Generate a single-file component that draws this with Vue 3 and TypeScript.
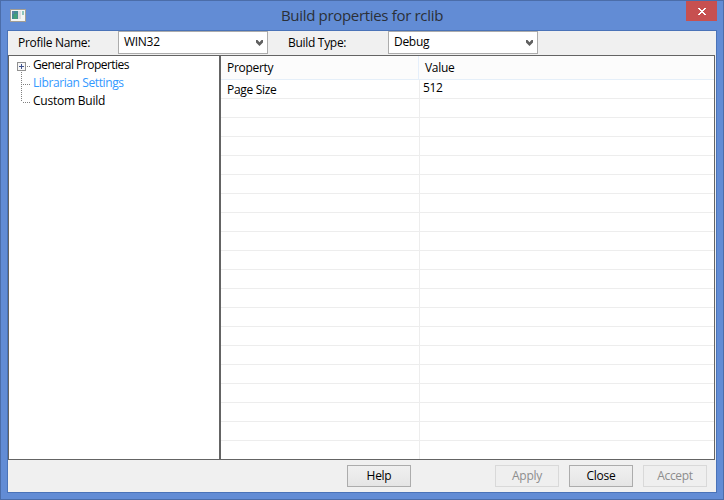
<script setup lang="ts">
import { ref } from 'vue'

interface TreeItem { label: string; expandable: boolean; selected: boolean }
interface Property { name: string; value: string }
interface Action { label: string; disabled: boolean }

const profile = ref('WIN32')
const buildType = ref('Debug')
const tree = ref<TreeItem[]>([
  { label: 'General Properties', expandable: true, selected: false },
  { label: 'Librarian Settings', expandable: false, selected: true },
  { label: 'Custom Build', expandable: false, selected: false },
])
const rows: Property[] = [
  { name: 'Page Size', value: '512' },
  ...Array.from({ length: 19 }, () => ({ name: '', value: '' })),
]
const actions: Action[] = [
  { label: 'Help', disabled: false },
  { label: 'Apply', disabled: true },
  { label: 'Close', disabled: false },
  { label: 'Accept', disabled: true },
]
function select(item: TreeItem) {
  tree.value.forEach((t) => (t.selected = t === item))
}
</script>

<template>
  <div class="window">
    <header class="titlebar">
      <svg class="app-icon" width="16" height="13" viewBox="0 0 16 13">
        <rect width="16" height="13" fill="#a29d94" />
        <rect x="1" y="1" width="14" height="11" fill="#f4f5f3" />
        <rect x="2" y="2" width="6" height="8" fill="#438c91" />
        <rect x="2" y="2" width="2" height="3" fill="#5d83a5" />
        <rect x="4" y="5" width="3" height="5" fill="#43a176" />
        <rect x="8" y="2" width="3" height="8" fill="#dedede" />
        <rect x="12" y="2" width="2" height="4" fill="#8fc6bd" />
      </svg>
      <h1>Build properties for rclib</h1>
      <button class="close" aria-label="Close window">
        <svg width="8" height="7" viewBox="0 0 8 7" shape-rendering="crispEdges">
          <path d="M0 0h2v1h1v1h2v-1h1v-1h2v1h-1v1h-1v1h-1v1h1v1h1v1h1v1h-2v-1h-1v-1h-2v1h-1v1h-2v-1h1v-1h1v-1h1v-1h-1v-1h-1v-1h-1z" fill="#fff" />
        </svg>
      </button>
    </header>

    <main class="client">
      <div class="toolbar">
        <span class="label profile-label">Profile Name:</span>
        <div class="combo">
          <span>{{ profile }}</span>
          <svg width="7" height="6" viewBox="0 0 7 6"><path d="M0 0h1.500L3.500 2.300 5.500 0H7v2.500L3.500 6 0 2.500z" fill="#606060" /></svg>
        </div>
        <span class="label type-label">Build Type:</span>
        <div class="combo debug">
          <span>{{ buildType }}</span>
          <svg width="7" height="6" viewBox="0 0 7 6"><path d="M0 0h1.500L3.500 2.300 5.500 0H7v2.500L3.500 6 0 2.500z" fill="#606060" /></svg>
        </div>
      </div>

      <div class="panes">
        <ul class="tree">
          <li v-for="item in tree" :key="item.label" :class="{ selected: item.selected }" @click="select(item)">
            <svg class="branch" width="22" height="18" viewBox="0 0 22 18" shape-rendering="crispEdges">
              <template v-if="item.expandable">
                <rect x="8.5" y="6.5" width="8" height="8" fill="#f7f7f7" stroke="#919191" />
                <path d="M10 10.5h5M12.500 8v5" stroke="#3f528d" />
                <path d="M18 10.500h4M12.500 16v2" stroke="#808080" stroke-dasharray="1 1" />
              </template>
              <template v-else>
                <path :d="item.label === 'Custom Build' ? 'M12.5 0v10' : 'M12.5 0v18'" stroke="#808080" stroke-dasharray="1 1" />
                <path d="M14 10.500h8" stroke="#808080" stroke-dasharray="1 1" />
              </template>
            </svg>
            <span>{{ item.label }}</span>
          </li>
        </ul>
        <section class="grid">
          <div class="head"><span>Property</span><span>Value</span></div>
          <div v-for="(row, i) in rows" :key="i" class="row">
            <span>{{ row.name }}</span><span class="value">{{ row.value }}</span>
          </div>
        </section>
      </div>

      <footer class="actions">
        <button v-for="a in actions" :key="a.label" :disabled="a.disabled">{{ a.label }}</button>
      </footer>
    </main>
  </div>
</template>

<style>
body { margin: 0; }
</style>

<style scoped>
* { box-sizing: border-box; }
.window {
  width: 724px;
  height: 500px;
  padding: 0 6px 6px;
  border: 1px solid #4b6da9;
  background: #628cd5;
  font: 12px/18px "Open Sans", "Noto Sans", sans-serif;
  letter-spacing: -0.3px;
  color: #000;
}
.titlebar { height: 29px; display: flex; justify-content: space-between; }
.app-icon { margin: 8px 0 0 3px; }
h1 {
  margin: 3px 0 0 12px;
  font-size: 15px;
  line-height: 22px;
  font-weight: 400;
  letter-spacing: -0.32px;
  color: #2b3038;
  white-space: nowrap;
}
.close {
  width: 31px;
  height: 20px;
  padding: 1px 0 0 1px;
  border: 0;
  background: #c75050;
  display: flex;
  align-items: center;
  justify-content: center;
}
.client {
  height: 463px;
  border: 1px solid #4a73b8;
  background: #f0f0f0;
}
.toolbar { height: 24px; display: flex; }
.label { height: 24px; line-height: 24px; white-space: nowrap; }
.profile-label { width: 110px; padding-left: 10px; }
.type-label { width: 120px; padding-left: 20px; }
.combo {
  width: 150px;
  height: 23px;
  border: 1px solid #acacac;
  background: #fff;
  padding: 0 4px 0 5px;
  display: flex;
  align-items: center;
  justify-content: space-between;
}
.combo span { line-height: 20px; height: 21px; }
.combo svg { margin-top: 1px; }
.panes {
  width: 707px;
  height: 405px;
  border: 1px solid #646464;
  display: flex;
  background: #fff;
}
.tree { width: 210px; margin: 0; padding: 0; list-style: none; }
.tree li { height: 18px; display: flex; gap: 2px; white-space: nowrap; }
.tree li:first-child { letter-spacing: -0.52px; }
.tree li:nth-child(2) { letter-spacing: -0.4px; }
.tree li:nth-child(3) { letter-spacing: -0.22px; }
.tree li.selected { color: #3399ff; }
.branch { flex: none; }
.grid { width: 495px; border-left: 2px solid #646464; overflow: hidden; }
.head, .row { display: grid; border-bottom: 1px solid #ededed; }
.head {
  grid-template-columns: 198px 1fr;
  height: 24px;
  line-height: 24px;
  background: #fcfcfc;
  border-color: #e5eff9;
}
.head span { padding-left: 6px; }
.head span:first-child { border-right: 1px solid #e5effb; }
.row { grid-template-columns: 199px 1fr; height: 19px; line-height: 20px; }
.row span { padding-left: 6px; height: 18px; }
.row span:first-child { border-right: 1px solid #ededed; }
.row .value { padding-left: 3px; line-height: 16px; }
.row:last-child { border-bottom: 0; }
.actions { display: flex; gap: 10px; padding: 5px 9px 0 0; justify-content: flex-end; }
.actions button {
  width: 64px;
  height: 22px;
  padding: 0;
  border: 1px solid #acacac;
  background: linear-gradient(#f0f0f0, #e5e5e5);
  font: inherit;
  letter-spacing: inherit;
  color: #000;
}
.actions button:first-child { margin-right: 74px; }
.actions button:disabled { border-color: #d9d9d9; background: #efefef; color: #8d8d8d; }
</style>
